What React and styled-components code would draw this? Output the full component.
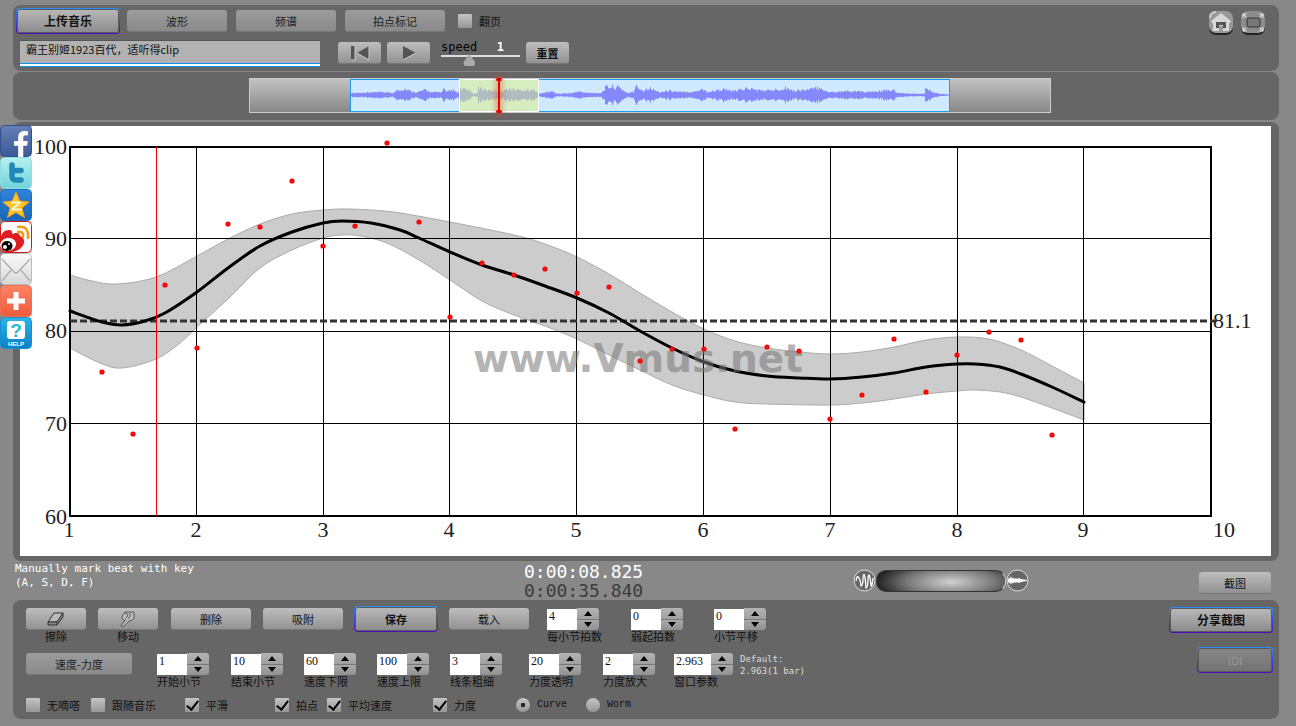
import React from "react";
import styled, { createGlobalStyle, css } from "styled-components";
import { FaFacebookF } from "react-icons/fa";

const GlobalStyle = createGlobalStyle`
  * {
    box-sizing: border-box;
  }
  body {
    margin: 0;
    background: #888;
    color: #111;
    font-family: "Liberation Sans", "Noto Sans CJK SC", sans-serif;
    font-size: 11px;
  }
  button, input {
    font: inherit;
    color: inherit;
  }
`;

const Page = styled.main`
  position: relative;
  padding: 5px 17px 8px 13px;
`;

const Panel = styled.section`
  background: #666;
  border-radius: 8px;
  margin-bottom: 1px;
`;

const ToolPanel = styled(Panel)`
  display: flex;
  justify-content: space-between;
  align-items: flex-start;
  padding: 3px 13px 4px 3px;
`;

const ToolRows = styled.div`
  display: flex;
  flex-direction: column;
  gap: 5px;
`;

const TabRow = styled.div`
  display: flex;
  align-items: center;
  gap: 9px;
  height: 26px;
  padding-left: 2px;
`;

const TransportRow = styled.div`
  display: flex;
  align-items: center;
  gap: 6px;
  height: 28px;
  padding-left: 4px;
`;

const highlight = css`
  height: 26px;
  margin: -2px;
  border: 1px solid transparent;
  border-radius: 4px;
  background: linear-gradient(#bababa, #8a8a8a) padding-box,
    linear-gradient(#2a90ff, #4a0cc0) border-box;
  box-shadow: inset 0 0 0 1px #5a5a5a;
`;

const Button = styled.button`
  display: flex;
  align-items: center;
  justify-content: center;
  flex: none;
  width: ${(p) => p.$width}px;
  height: 22px;
  padding: 0;
  border: 0;
  border-bottom: 1px solid #777;
  border-radius: 3px;
  background: ${(p) =>
    p.$flat
      ? "linear-gradient(#9c9c9c, #8a8a8a)"
      : "linear-gradient(#bebebe, #929292)"};
  color: ${(p) => (p.$flat ? "#222" : "#111")};
  font-family: "Noto Sans CJK SC", sans-serif;
  font-weight: ${(p) => (p.$bold ? 700 : 400)};
  font-size: ${(p) => (p.$large ? 12 : 11)}px;
  line-height: 16px;
  ${(p) => p.$highlight && highlight}
  &:disabled {
    color: #999;
    background: linear-gradient(#868686, #747474) padding-box,
      linear-gradient(#2a90ff, #4a0cc0) border-box;
  }
`;

const CheckLabel = styled.label`
  display: flex;
  align-items: center;
  gap: 7px;
  height: 14px;
  margin-left: ${(p) => p.$indent || 0}px;
  font-family: ${(p) =>
    p.$mono ? '"Liberation Mono", monospace' : '"Noto Sans CJK SC", sans-serif'};
  font-size: ${(p) => (p.$mono ? 10 : 11)}px;
  line-height: 14px;
  white-space: nowrap;
`;

const Tick = styled.input`
  appearance: none;
  flex: none;
  width: 14px;
  height: 14px;
  margin: 0;
  border-radius: ${(p) => (p.type === "radio" ? "50%" : "1px")};
  background: linear-gradient(#c4c4c4, #969696);
  display: grid;
  place-items: center;
  &[type="radio"]:checked::before {
    content: "";
    width: 4px;
    height: 4px;
    border-radius: 1px;
    background: #222;
  }
  &[type="checkbox"]:checked::before {
    content: "";
    width: 5px;
    height: 10px;
    margin-bottom: 3px;
    border: solid #000;
    border-width: 0 2px 2px 0;
    transform: rotate(38deg);
  }
`;

const FileName = styled.input`
  width: 300px;
  height: 27px;
  margin-right: 12px;
  padding: 0 6px 8px;
  border: 0;
  border-top: 1px solid #555;
  border-bottom: 1px solid #0c93ee;
  border-radius: 0;
  background: #b2b2b2;
  box-shadow: inset 0 -2px #fff, inset 0 -3px #0c93ee;
  font-family: "Noto Sans CJK SC", sans-serif;
`;

const Speed = styled.div`
  width: 79px;
  margin-left: 5px;
  font: 12px/14px "DejaVu Sans Mono", monospace;
  color: #000;
`;

const SpeedText = styled.div`
  display: flex;
  justify-content: space-between;
  padding-right: 16px;
  output {
    color: #fff;
    font-weight: 700;
  }
`;

const SpeedRange = styled.input`
  appearance: none;
  display: block;
  width: 100%;
  height: 12px;
  margin: 0;
  background: linear-gradient(#ddd, #ddd) 0 1px / 100% 2px no-repeat;
  &::-webkit-slider-thumb {
    appearance: none;
    width: 12px;
    height: 12px;
    background: #aaa;
    clip-path: polygon(50% 0, 100% 70%, 90% 100%, 10% 100%, 0 70%);
  }
`;

const CornerIcons = styled.div`
  display: flex;
  gap: 6px;
  padding-top: 2px;
`;

const CornerButton = styled.button`
  width: 26px;
  height: 26px;
  padding: 0;
  border: 0;
  background: none;
  svg {
    display: block;
  }
`;

const TimelinePanel = styled(Panel)`
  display: flex;
  justify-content: center;
  padding: 6px 0 7px 8px;
  margin-bottom: 2px;
`;

const Track = styled.div`
  display: flex;
  justify-content: center;
  flex: 1;
  max-width: 802px;
  height: 35px;
  border: 1px solid #ccc;
  background: linear-gradient(#c2c2c2, #888);
`;

const Clip = styled.div`
  position: relative;
  width: 75%;
  height: 33px;
  border: 1px solid #1c9cf0;
  background: #cfeaff;
  svg {
    display: block;
    width: 100%;
    height: 30px;
  }
`;

const VisibleRange = styled.div`
  position: absolute;
  top: -1px;
  bottom: -1px;
  left: 18%;
  width: 13.5%;
  border: 1px solid #fff;
  background: rgba(222, 240, 130, 0.5);
`;

const Playhead = styled.div`
  position: absolute;
  top: -2px;
  bottom: -2px;
  left: 24.5%;
  width: 2px;
  background: #e60000;
  box-shadow: 0 0 5px 3px rgba(230, 70, 40, 0.4);
  &::before,
  &::after {
    content: "";
    position: absolute;
    left: -2px;
    width: 6px;
    height: 3px;
    border-radius: 2px;
    background: #e60000;
  }
  &::after {
    bottom: 0;
  }
`;

const ChartPanel = styled(Panel)`
  padding: 4px 8px 5px 7px;
  margin: 0;
  svg {
    display: block;
    width: 100%;
    height: auto;
    background: #fff;
  }
`;

const Status = styled.div`
  display: grid;
  grid-template-columns: 509px 329px 1fr auto;
  align-items: start;
  height: 39px;
  padding: 0 8px 0 2px;
`;

const Hint = styled.p`
  margin: 1px 0 0;
  color: #fff;
  font: 11px/14px "DejaVu Sans Mono", monospace;
`;

const Clock = styled.div`
  padding-top: 1px;
  color: #fff;
  font: 18px/19px "DejaVu Sans Mono", monospace;
  div + div {
    color: #3c3c3c;
  }
`;

const Mixer = styled.div`
  display: flex;
  align-items: center;
  padding-top: 8px;
`;

const MixRange = styled.input`
  appearance: none;
  width: 130px;
  height: 22px;
  margin: 0;
  border: 1px solid #333;
  border-right-color: #ccc;
  border-radius: 10px;
  background: radial-gradient(ellipse 75px 22px at 58% 55%, #d0d0d0, #777 60%, #222);
  &::-webkit-slider-thumb {
    appearance: none;
    width: 10px;
    height: 20px;
  }
`;

const SnapButton = styled(Button)`
  margin-top: 11px;
`;

const ControlPanel = styled(Panel)`
  display: flex;
  justify-content: space-between;
  margin: 0;
  padding: 8px 8px 7px 13px;
`;

const ControlRows = styled.div`
  display: flex;
  flex-direction: column;
  gap: 9px;
`;

const ControlRow = styled.div`
  display: grid;
  grid-template-columns: ${(p) => p.$columns};
  align-items: start;
  min-height: ${(p) => (p.$short ? 14 : 36)}px;
`;

const Stack = styled.div`
  width: 60px;
  text-align: center;
  font: 11px/12px "Noto Sans CJK SC", sans-serif;
`;

const Field = styled.div`
  width: max-content;
  label {
    display: block;
    width: 0;
    font: 11px/12px "Noto Sans CJK SC", sans-serif;
    white-space: nowrap;
  }
`;

const FieldBox = styled.div`
  display: flex;
  height: 22px;
  input {
    width: ${(p) => (p.$wide ? 37 : 30)}px;
    height: 21px;
    margin-top: 1px;
    padding: 0 0 7px 2px;
    border: 0;
    background: #fff;
    font: 12px/12px "Liberation Serif", serif;
  }
`;

const Stepper = styled.div`
  display: grid;
  width: 22px;
  border-radius: 0 3px 3px 0;
  overflow: hidden;
  button {
    display: grid;
    place-items: center;
    padding: 0;
    border: 0;
    background: linear-gradient(#b4b4b4, #a0a0a0);
  }
  button + button {
    border-top: 1px solid #777;
    background: linear-gradient(#a8a8a8, #929292);
  }
`;

const Default = styled.p`
  margin: 0;
  color: #ddd;
  font: 9px/12px "DejaVu Sans Mono", monospace;
`;

const SideActions = styled.div`
  display: flex;
  flex-direction: column;
  align-items: flex-end;
  gap: 18px;
  padding-top: 1px;
`;

const ShareBar = styled.nav`
  position: absolute;
  left: 0;
  top: 125px;
  display: grid;
  a {
    display: block;
    width: 32px;
    height: 32px;
  }
  svg {
    display: block;
  }
`;

const mean = [
  [70, 311], [102, 322], [122, 325], [145, 321], [165, 313], [197, 292],
  [228, 268], [260, 246], [292, 232], [323, 223], [342, 221], [371, 223],
  [400, 230], [419, 238], [450, 252], [482, 265], [514, 275], [545, 286],
  [577, 298], [609, 313], [640, 331], [672, 348], [704, 362], [735, 371],
  [767, 376], [800, 378], [830, 379], [862, 377], [894, 373], [926, 367],
  [957, 364], [975, 364], [1000, 367], [1021, 374], [1052, 387], [1084, 402],
];

const upper = [
  [70, 275], [92, 281], [117, 284], [156, 277], [197, 256], [228, 239],
  [260, 224], [292, 214], [323, 210], [345, 209], [371, 210], [400, 213],
  [450, 222], [514, 235], [545, 244], [577, 257], [609, 274], [640, 293],
  [672, 312], [704, 329], [735, 341], [767, 348], [800, 352], [830, 354],
  [862, 352], [894, 347], [926, 340], [957, 337], [989, 339], [1021, 350],
  [1052, 366], [1084, 383],
];

const lower = [
  [70, 348], [100, 363], [122, 368], [156, 359], [180, 343], [197, 327],
  [228, 299], [260, 268], [292, 250], [323, 238], [342, 235], [360, 236],
  [387, 243], [419, 260], [450, 280], [482, 301], [514, 315], [545, 326],
  [577, 339], [609, 355], [640, 370], [672, 385], [704, 395], [735, 402],
  [767, 404], [830, 405], [862, 403], [894, 399], [926, 394], [957, 391],
  [975, 390], [1000, 392], [1021, 397], [1052, 408], [1084, 420],
];

const beats = [
  [102, 372], [133, 434], [165, 285], [197, 348], [228, 224], [260, 227],
  [292, 181], [323, 246], [355, 226], [387, 143], [419, 222], [450, 317],
  [482, 263], [514, 275], [545, 269], [577, 293], [609, 287], [640, 361],
  [672, 349], [704, 349], [735, 429], [767, 347], [799, 351], [830, 419],
  [862, 395], [894, 339], [926, 392], [957, 355], [989, 332], [1021, 340],
  [1052, 435],
];

// Catmull-Rom spline through the points, as cubic segments
const spline = (pts) =>
  pts
    .slice(0, -1)
    .map((p, i) => {
      const a = pts[i - 1] || p;
      const b = pts[i + 1];
      const c = pts[i + 2] || b;
      return `C${p[0] + (b[0] - a[0]) / 6} ${p[1] + (b[1] - a[1]) / 6} ${
        b[0] - (c[0] - p[0]) / 6
      } ${b[1] - (c[1] - p[1]) / 6} ${b[0]} ${b[1]}`;
    })
    .join("");

const band = `M70 275${spline(upper)}L1084 420${spline([...lower].reverse())}Z`;

const envelope = [
  [0, 2], [30, 3], [42, 2], [46, 6], [54, 7], [60, 4], [66, 3], [74, 6],
  [80, 3], [90, 3], [92, 8], [95, 3], [101, 6], [106, 2], [109, 7], [118, 6],
  [121, 1], [126, 2], [127, 9], [136, 5], [142, 6], [150, 4], [156, 7],
  [170, 6], [186, 5], [188, 1], [200, 4], [206, 1], [222, 2], [226, 4],
  [236, 2], [250, 2], [254, 9], [260, 10], [268, 9], [276, 2], [282, 3],
  [284, 11], [292, 5], [297, 9], [308, 3], [318, 5], [330, 3], [345, 4],
  [350, 8], [356, 3], [372, 7], [382, 4], [395, 8], [410, 5], [425, 6],
  [434, 9], [442, 5], [455, 6], [470, 9], [476, 3], [490, 4], [505, 4],
  [518, 3], [541, 6], [546, 2], [560, 1], [573, 1], [574, 9], [577, 6],
  [582, 3], [588, 1], [598, 0],
];

const amplitude = (x) => {
  const i = envelope.findIndex((e) => e[0] > x);
  if (i < 1) return 0;
  const [x0, a0] = envelope[i - 1];
  const [x1, a1] = envelope[i];
  const a = a0 + ((a1 - a0) * (x - x0)) / (x1 - x0);
  const noise = Math.abs(Math.sin(x * 12.9898) * 43758.5453) % 1;
  return a * (0.5 + 0.5 * noise);
};

const wave = Array.from({ length: 598 }, (_, x) => {
  const a = amplitude(x) + 0.5;
  return `M${x + 0.5} ${15 - a}V${15 + a}`;
}).join("");

const columnX = [70, 197, 324, 450, 577, 704, 831, 958, 1084, 1211];

const Chart = () => (
  <svg viewBox="20 126 1251 430" role="img" aria-label="Tempo curve">
    <path d={band} fill="#ccc" stroke="#aaa" />
    <g stroke="#000" shapeRendering="crispEdges">
      {columnX.slice(1, 9).map((x) => (
        <path key={x} d={`M${x - 0.5} 147V516`} />
      ))}
      {[238, 331, 423].map((y) => (
        <path key={y} d={`M70 ${y + 0.5}H1211`} />
      ))}
      <rect x="70" y="147" width="1141" height="369" fill="none" strokeWidth="2" />
    </g>
    <path d="M70 321H1216" stroke="#333" strokeWidth="3" strokeDasharray="7 3" />
    <path d={`M70 311${spline(mean)}`} fill="none" stroke="#000" strokeWidth="3" strokeLinecap="round" />
    <path d="M156.500 147V516" stroke="#e00" />
    <text
      x="473"
      y="372"
      fill="#777"
      opacity="0.55"
      fontFamily="DejaVu Sans, sans-serif"
      fontWeight="700"
      fontSize="39"
    >
      www.Vmus.net
    </text>
    {beats.map(([x, y]) => (
      <circle key={x} cx={x} cy={y} r="1.7" fill="#a44" stroke="#f00" strokeWidth="1.8" />
    ))}
    <g fontFamily="Liberation Serif, serif" fontSize="22" fill="#222">
      {[100, 90, 80, 70, 60].map((n, i) => (
        <text key={n} x="67" y={[154, 246, 338, 431, 524][i]} textAnchor="end">
          {n}
        </text>
      ))}
      {columnX.map((x, i) => (
        <text key={x} x={i === 9 ? 1224 : x - 1} y="537" textAnchor="middle">
          {i + 1}
        </text>
      ))}
      <text x="1213" y="328">81.1</text>
    </g>
  </svg>
);

const NumberField = ({ id, label, value, wide }) => (
  <Field>
    <FieldBox $wide={wide}>
      <input id={id} type="text" defaultValue={value} />
      <Stepper>
        <button type="button" aria-label={`${label} +`}>
          <svg width="8" height="5"><path d="M0 5L4 0L8 5Z" /></svg>
        </button>
        <button type="button" aria-label={`${label} -`}>
          <svg width="8" height="5"><path d="M0 0L4 5L8 0Z" /></svg>
        </button>
      </Stepper>
    </FieldBox>
    <label htmlFor={id}>{label}</label>
  </Field>
);

const Check = ({ label, checked, type = "checkbox", ...rest }) => (
  <CheckLabel {...rest}>
    <Tick type={type} name={type === "radio" ? "view" : undefined} defaultChecked={checked} />
    {label}
  </CheckLabel>
);

const Tile = ({ label, from, to, edge, children }) => {
  const id = `tile-${label}`;
  return (
    <a href="#share" aria-label={label}>
      <svg width="32" height="32" viewBox="0 0 32 32">
        <defs>
          <linearGradient id={id} x2="0" y2="1">
            <stop stopColor={from} />
            <stop offset="1" stopColor={to} />
          </linearGradient>
        </defs>
        <rect x=".5" y=".5" width="31" height="31" rx="4" fill={`url(#${id})`} stroke={edge} />
        {children}
      </svg>
    </a>
  );
};

const Share = () => (
  <ShareBar aria-label="Share">
    <Tile label="Facebook" from="#6580b5" to="#3b5998" edge="#34508c">
      <FaFacebookF x="8" y="6" size="26" color="#fff" />
    </Tile>
    <Tile label="Twitter" from="#b5f0f0" to="#72d4da" edge="#8fdce0">
      <path d="M12 8V19Q12 23 16 23H21M12 13.500H21" fill="none" stroke="#2189b5" strokeWidth="5.500" strokeLinecap="round" />
    </Tile>
    <Tile label="Qzone" from="#2e86dc" to="#1664b8" edge="#1c6cc0">
      <path d="M16 3L19.800 12L29 13L22 19L24.500 28.500L16 23.500L7.500 28.500L10 19L3 13L12.200 12Z" fill="#ffc52e" stroke="#f09c10" />
      <path d="M11 13.500H20L12 20.500H22" fill="none" stroke="#fff6cc" strokeWidth="1.800" strokeLinejoin="round" />
    </Tile>
    <Tile label="Weibo" from="#fff" to="#f6f6f6" edge="#d01818">
      <path d="M1 15Q3 9 9 9Q13 9 12 13Q19 10 20 15Q25 17 24 22Q22 29 12 31H4Q1 30 1 27Z" fill="#e01c20" />
      <ellipse cx="8" cy="23.500" rx="8" ry="6.500" fill="#fff" transform="rotate(-10 8 23)" />
      <ellipse cx="7" cy="25" rx="5.500" ry="5" />
      <circle cx="5" cy="26" r="2" fill="#fff" />
      <circle cx="9" cy="23" r="1" fill="#fff" />
      <path d="M18 6Q29 4 28 17M18 11Q24 10 23 16" fill="none" stroke="#f59a18" strokeWidth="2.500" strokeLinecap="round" />
    </Tile>
    <Tile label="Mail" from="#fafafa" to="#d8d8d8" edge="#bbb">
      <path d="M2 6L14 19Q16 21 18 19L30 6M2 28L11 17M30 28L21 17" fill="none" stroke="#aaa" strokeWidth="1.200" />
    </Tile>
    <Tile label="More" from="#ff8464" to="#ee5a3e" edge="#ee7050">
      <path d="M16 7V25M7 16H25" stroke="#fff" strokeWidth="5" />
    </Tile>
    <Tile label="Help" from="#2cb4e8" to="#0880c8" edge="#1490d0">
      <rect x="7" y="4" width="18" height="18" rx="3" fill="#fff" />
      <text x="16" y="20" textAnchor="middle" fontFamily="Liberation Sans, sans-serif" fontWeight="700" fontSize="19" fill="#22bcd0">?</text>
      <text x="16" y="29" textAnchor="middle" fontFamily="Liberation Sans, sans-serif" fontWeight="700" fontSize="6" fill="#fff">HELP</text>
    </Tile>
  </ShareBar>
);

const App = () => (
  <>
    <GlobalStyle />
    <Page>
      <ToolPanel>
        <ToolRows>
          <TabRow>
            <Button $width={104} $bold $large $highlight>上传音乐</Button>
            <Button $width={100} $flat>波形</Button>
            <Button $width={100} $flat>频谱</Button>
            <Button $width={100} $flat>拍点标记</Button>
            <Check label="翻页" $indent={4} />
          </TabRow>
          <TransportRow>
            <FileName aria-label="Music file" defaultValue="霸王别姬1923百代，适听得clip" />
            <Button $width={43} aria-label="Back to start">
              <svg width="22" height="16">
                <path d="M2 1H6V15H2ZM20 1V15L8 8Z" fill="#555" />
                <path d="M6 1V15H2M20 1V15L8 8" fill="none" stroke="#ccc" />
              </svg>
            </Button>
            <Button $width={43} aria-label="Play">
              <svg width="16" height="16">
                <path d="M2 1L15 8L2 15Z" fill="#555" />
                <path d="M2 15L15 8" stroke="#ccc" />
              </svg>
            </Button>
            <Speed>
              <SpeedText>
                <label htmlFor="speed">speed</label>
                <output>1</output>
              </SpeedText>
              <SpeedRange id="speed" type="range" min="0" max="3" step="0.1" defaultValue="1" />
            </Speed>
            <Button $width={43} $bold>重置</Button>
          </TransportRow>
        </ToolRows>
        <CornerIcons>
          <CornerButton aria-label="Home">
            <svg width="26" height="26">
              <rect x="1" y="2" width="24" height="23" rx="7" fill="#222" />
              <rect x="1" y="1" width="24" height="22" rx="7" fill="#999" />
              <path d="M2 8Q2 2 8 2" fill="none" stroke="#ccc" strokeWidth="2" />
              <path d="M13 3L23 11L22 13H21V21H15V16H11V21H5V13H4L3 11Z" fill="#d8d8d8" />
              <path d="M8 12H18V18H15V15H11V18H8Z" fill="#555" />
            </svg>
          </CornerButton>
          <CornerButton aria-label="Full screen">
            <svg width="26" height="26">
              <rect x="1" y="2" width="24" height="23" rx="7" fill="#222" />
              <rect x="1" y="1" width="24" height="22" rx="7" fill="#8c8c8c" />
              <rect x="7" y="8" width="13" height="9" rx="2" fill="#777" stroke="#333" />
              <path d="M3 8V4H7M3 4L6 7M19 4H23V8M23 4L20 7M3 17V21H7M3 21L6 18M23 17V21H19M23 21L20 18" fill="none" stroke="#ddd" strokeWidth="1.200" />
            </svg>
          </CornerButton>
        </CornerIcons>
      </ToolPanel>

      <TimelinePanel>
        <Track>
          <Clip>
            <svg viewBox="0 0 598 30" preserveAspectRatio="none">
              <path d={wave} stroke="#8588fb" />
            </svg>
            <VisibleRange />
            <Playhead />
          </Clip>
        </Track>
      </TimelinePanel>

      <ChartPanel>
        <Chart />
      </ChartPanel>

      <Status>
        <Hint>
          Manually mark beat with key
          <br />
          (A, S, D, F)
        </Hint>
        <Clock>
          <div>0:00:08.825</div>
          <div>0:00:35.840</div>
        </Clock>
        <Mixer>
          <svg width="23" height="23">
            <circle cx="11.500" cy="11.500" r="10.500" fill="#666" stroke="#ddd" />
            <path d="M3 12Q4 5 6 9T8 17Q10 17 10 9Q11 2 12 9T13 19Q15 19 15 9Q16 3 17 9T18 17Q19 18 20 9" fill="none" stroke="#fff" strokeWidth="1.300" />
          </svg>
          <MixRange type="range" aria-label="Mix" />
          <svg width="23" height="23">
            <circle cx="11.500" cy="11.500" r="10.500" fill="#666" stroke="#ddd" />
            <path d="M2 11L3 8L4 10L5 7L6 10L7 8L8 10L10 9L11 10L13 9L15 10L21 11V12L15 13L13 14L11 13L10 14L8 13L7 15L6 13L5 16L4 13L3 15L2 12Z" fill="#fff" />
          </svg>
        </Mixer>
        <SnapButton $width={72}>截图</SnapButton>
      </Status>

      <ControlPanel>
        <ControlRows>
          <ControlRow $columns="72px 73px 92px 93px 93px 98px 84px 83px auto">
            <Stack>
              <Button $width={60} aria-label="擦除">
                <svg width="20" height="16">
                  <path d="M2 11L8 2H17L11 11Z" fill="#bbb" stroke="#333" />
                  <path d="M2 11H11V14H2ZM11 11L17 2V6L11 14" fill="#888" stroke="#333" />
                </svg>
              </Button>
              擦除
            </Stack>
            <Stack>
              <Button $width={60} aria-label="移动">
                <svg width="20" height="18">
                  <path d="M7 11Q3 9 4 6L7 2H16V8Q15 11 11 11L5 17L3 16L8 9M7 3Q12 4 8 8M11 3Q14 5 10 9" fill="#bbb" stroke="#555" />
                </svg>
              </Button>
              移动
            </Stack>
            <Button $width={80}>删除</Button>
            <Button $width={80}>吸附</Button>
            <Button $width={84} $bold $highlight>保存</Button>
            <Button $width={80}>载入</Button>
            <NumberField id="beats" label="每小节拍数" value="4" />
            <NumberField id="upbeat" label="弱起拍数" value="0" />
            <NumberField id="shift" label="小节平移" value="0" />
          </ControlRow>
          <ControlRow $columns="131px 74px 73px 73px 73px 79px 74px 71px 66px auto">
            <Button $width={106} $flat>速度-力度</Button>
            <NumberField id="start" label="开始小节" value="1" />
            <NumberField id="end" label="结束小节" value="10" />
            <NumberField id="low" label="速度下限" value="60" />
            <NumberField id="high" label="速度上限" value="100" />
            <NumberField id="line" label="线条粗细" value="3" />
            <NumberField id="alpha" label="力度透明" value="20" />
            <NumberField id="scale" label="力度放大" value="2" />
            <NumberField id="window" label="窗口参数" value="2.963" wide />
            <Default>
              Default:
              <br />
              2.963(1 bar)
            </Default>
          </ControlRow>
          <ControlRow $short $columns="65px 94px 90px 52px 106px 83px 70px auto">
            <Check label="无嘀嗒" />
            <Check label="跟随音乐" />
            <Check label="平滑" checked />
            <Check label="拍点" checked />
            <Check label="平均速度" checked />
            <Check label="力度" checked />
            <Check label="Curve" type="radio" checked $mono />
            <Check label="Worm" type="radio" $mono />
          </ControlRow>
        </ControlRows>
        <SideActions>
          <Button $width={104} $bold $large $highlight>分享截图</Button>
          <Button $width={76} $highlight disabled>IOI</Button>
        </SideActions>
      </ControlPanel>
      <Share />
    </Page>
  </>
);

export default App;
